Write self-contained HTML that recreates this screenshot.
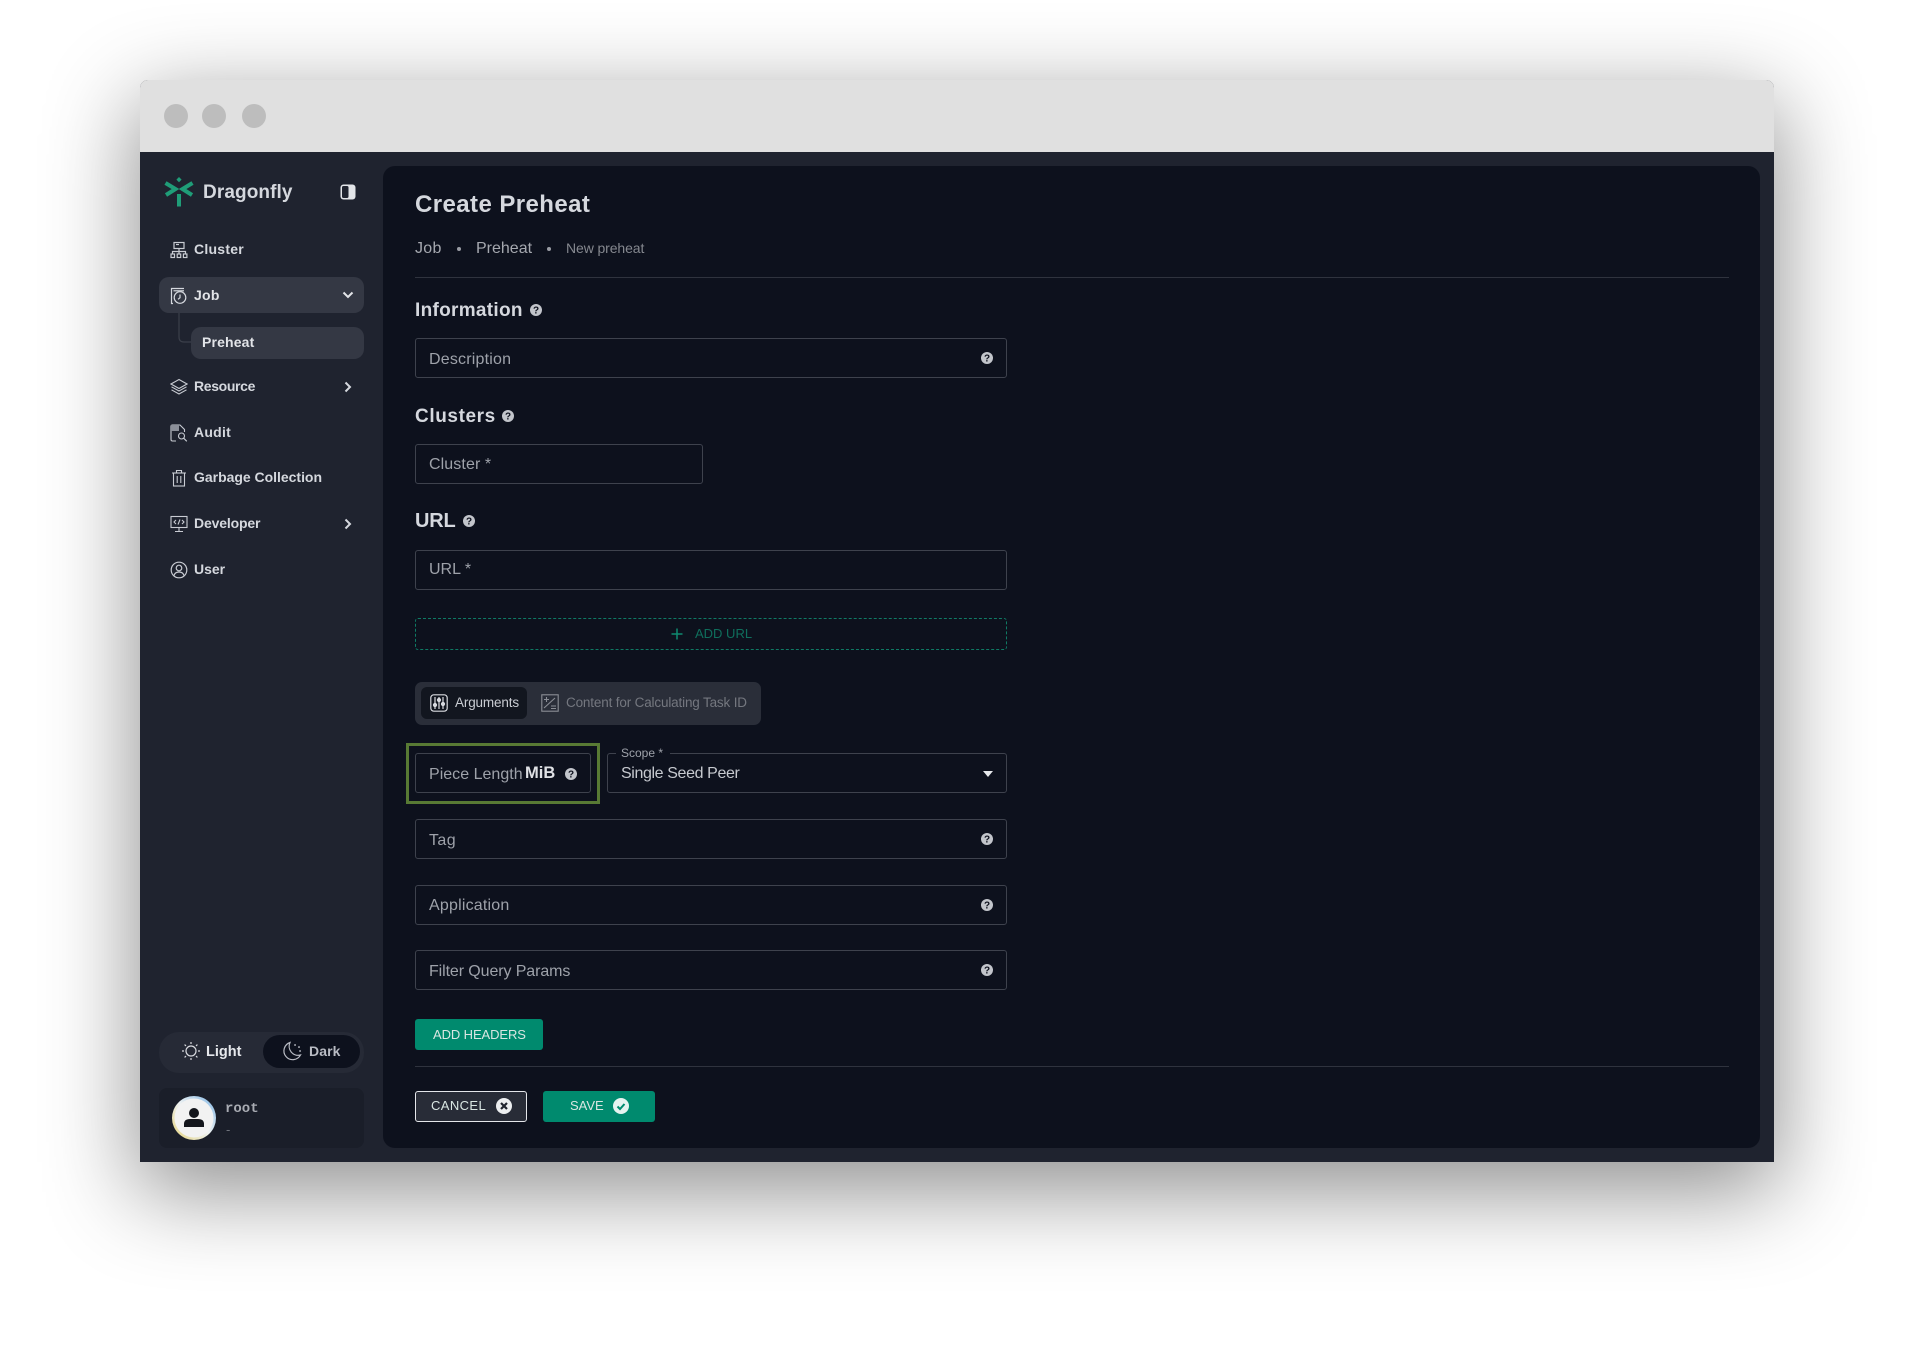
<!DOCTYPE html>
<html lang="en">
<head>
<meta charset="utf-8">
<title>Dragonfly - Create Preheat</title>
<style>
html,body{margin:0;padding:0;background:#fff;}
body{width:1914px;height:1362px;position:relative;overflow:hidden;font-family:"Liberation Sans",sans-serif;}
#all{position:absolute;left:0;top:0;width:1914px;height:1362px;overflow:hidden;filter:blur(.35px);}
.abs,.t,svg.i,.input{position:absolute;}
#win{position:absolute;left:140px;top:80px;width:1634px;height:1082px;border-radius:8px 8px 0 0;box-shadow:0 26px 90px 4px rgba(0,0,0,.44);background:#1f232f;}
#bar{position:absolute;left:140px;top:80px;width:1634px;height:72px;background:#e0e0e0;border-radius:8px 8px 0 0;}
.dot{position:absolute;width:24px;height:24px;border-radius:50%;background:#bdbdbd;top:104px;}
#side{position:absolute;left:140px;top:152px;width:243px;height:1010px;background:#1f232f;}
#main{position:absolute;left:383px;top:166px;width:1377px;height:982px;background:#0d111d;border-radius:12px;}
#rest{position:absolute;left:383px;top:152px;width:1391px;height:1010px;background:#1f232f;}
.t{white-space:nowrap;line-height:1;}
.nav{font-size:14px;font-weight:700;color:#d5d8de;letter-spacing:.25px;}
.h{font-size:19px;font-weight:700;color:#d5d8de;}
.input{border:1px solid #3e424d;border-radius:3px;box-sizing:border-box;}
.ph{font-size:16px;color:#9ea2aa;letter-spacing:.2px;}
.hr{position:absolute;left:415px;width:1314px;height:1px;background:#2f333e;}
.btn{position:absolute;border-radius:3px;box-sizing:border-box;}
.bt{font-size:13px;color:#d9e6e2;letter-spacing:0;}
</style>
</head>
<body>
<div id="all">
<div id="win"></div>
<div id="rest"></div>
<div id="side"></div>
<div id="bar"></div>
<div class="dot" style="left:164px"></div>
<div class="dot" style="left:202px"></div>
<div class="dot" style="left:242px"></div>
<div id="main"></div>

<!-- Sidebar -->
<svg class="i" style="left:164px;top:176px" width="30" height="32" viewBox="0 0 30 32" fill="none">
<g stroke="#1f9d78" stroke-width="4" stroke-linecap="butt">
<path d="M1.500 7 11.500 13 2 19"/><path d="M28.500 7 18.500 13 28 19"/><path d="M15 18V30.500"/>
</g>
<path d="M15 1l2.600 2.600L15 6.200l-2.600-2.600z" fill="#1f9d78"/>
</svg>
<div class="t" style="left:203px;top:183px;font-size:19px;font-weight:700;color:#d5d8de;letter-spacing:.1px">Dragonfly</div>
<svg class="i" style="left:340px;top:184px" width="16" height="16" viewBox="0 0 16 16">
<rect x=".5" y=".5" width="15" height="15" rx="3" fill="#e3e5e9"/>
<rect x="2" y="2" width="6.5" height="12" rx="1.5" fill="#1f232f"/>
</svg>

<svg class="i" style="left:170px;top:241px" width="18" height="18" viewBox="0 0 18 18" fill="none" stroke="#c9ccd3" stroke-width="1.2">
<rect x="4" y="1.5" width="10" height="6"/><path d="M6 3.500h3"/><path d="M9 7.500v3M2.500 13v-2.500h13V13M9 10.500V13"/>
<rect x="1" y="13" width="3.500" height="3.500"/><rect x="7.200" y="13" width="3.500" height="3.500"/><rect x="13.400" y="13" width="3.500" height="3.500"/>
</svg>
<div class="t nav" style="left:194px;top:242px">Cluster</div>

<div class="abs" style="left:159px;top:277px;width:205px;height:36px;background:#343844;border-radius:10px"></div>
<svg class="i" style="left:170px;top:287px" width="18" height="18" viewBox="0 0 18 18" fill="none" stroke="#d5d8de" stroke-width="1.2">
<path d="M3 16.500H1.500V1.500H14"/><path d="M3.500 3.800h10.500"/><circle cx="10" cy="10.500" r="5.800"/><path d="M10 7.500v3.200l-2 1.600"/>
</svg>
<div class="t nav" style="left:194px;top:288px;color:#e2e4e8">Job</div>
<svg class="i" style="left:341px;top:290px" width="14" height="10" viewBox="0 0 14 10" fill="none" stroke="#e2e4e8" stroke-width="2"><path d="M2.500 2.500 7 7l4.500-4.500"/></svg>
<svg class="i" style="left:178px;top:313px" width="16" height="32" viewBox="0 0 16 32" fill="none" stroke="#3b3f4a" stroke-width="1.200"><path d="M1 0V24Q1 29 6 29H13"/></svg>
<div class="abs" style="left:191px;top:327px;width:173px;height:32px;background:#343844;border-radius:10px"></div>
<div class="t nav" style="left:202px;top:335px;color:#e2e4e8;letter-spacing:.15px">Preheat</div>

<svg class="i" style="left:170px;top:378px" width="18" height="18" viewBox="0 0 18 18" fill="none" stroke="#c9ccd3" stroke-width="1.100"><path d="M9 1.500 17 6 9 10.500 1 6z"/><path d="M1.500 8.800 9 13l7.500-4.200"/><path d="M1.500 11.800 9 16l7.500-4.200"/></svg>
<div class="t nav" style="left:194px;top:379px;letter-spacing:-.35px">Resource</div>
<svg class="i" style="left:343px;top:380px" width="10" height="14" viewBox="0 0 10 14" fill="none" stroke="#d5d8de" stroke-width="2"><path d="M2.500 2.500 7 7l-4.500 4.500"/></svg>

<svg class="i" style="left:170px;top:424px" width="18" height="18" viewBox="0 0 18 18" fill="none" stroke="#c9ccd3" stroke-width="1.100">
<path d="M6 17H2.500Q1 17 1 15.500V2.500Q1 1 2.500 1H10l4.500 4.500V8"/><path d="M1 1h8v6H1z" fill="#8b8f99" stroke="none"/><circle cx="11.500" cy="12" r="3"/><path d="m13.800 14.300 3 3"/></svg>
<div class="t nav" style="left:194px;top:425px">Audit</div>

<svg class="i" style="left:171px;top:469px" width="16" height="18" viewBox="0 0 16 18" fill="none" stroke="#c9ccd3" stroke-width="1.100"><path d="M1 4h14M5.500 4V1.500h5V4"/><rect x="2.500" y="4" width="11" height="13"/><path d="M6.200 7v7M9.800 7v7"/></svg>
<div class="t nav" style="left:194px;top:470px;letter-spacing:-.02px">Garbage Collection</div>

<svg class="i" style="left:170px;top:515px" width="18" height="18" viewBox="0 0 18 18" fill="none" stroke="#c9ccd3" stroke-width="1.100"><rect x="1" y="1.500" width="16" height="11"/><path d="M9 12.500V16M5 16.500h8M6 5 4 7l2 2M12 5l2 2-2 2M10 4.500l-2 5"/></svg>
<div class="t nav" style="left:194px;top:516px;letter-spacing:-.15px">Developer</div>
<svg class="i" style="left:343px;top:517px" width="10" height="14" viewBox="0 0 10 14" fill="none" stroke="#d5d8de" stroke-width="2"><path d="M2.500 2.500 7 7l-4.500 4.500"/></svg>

<svg class="i" style="left:170px;top:561px" width="18" height="18" viewBox="0 0 18 18" fill="none" stroke="#c9ccd3" stroke-width="1.200"><circle cx="9" cy="9" r="7.800"/><circle cx="9" cy="7" r="2.800"/><path d="M4 14.500Q5 11 9 11t5 3.500"/></svg>
<div class="t nav" style="left:194px;top:562px;letter-spacing:0">User</div>

<div class="abs" style="left:159px;top:1032px;width:205px;height:41px;background:#262a36;border-radius:20px"></div>
<div class="abs" style="left:263px;top:1035px;width:97px;height:33px;background:#0d111d;border-radius:17px"></div>
<svg class="i" style="left:181px;top:1041px" width="20" height="20" viewBox="0 0 20 20" fill="none" stroke="#d9dbe0" stroke-width="1.200"><circle cx="10" cy="10" r="5"/><path d="M10 1v2M10 17v2M1 10h2M17 10h2M3.600 3.600 5 5M15 15l1.400 1.400M3.600 16.400 5 15M15 5l1.400-1.400"/></svg>
<div class="t" style="left:206px;top:1045px;font-size:14.500px;font-weight:700;color:#e6e8ec">Light</div>
<svg class="i" style="left:282px;top:1041px" width="21" height="20" viewBox="0 0 21 20" fill="none" stroke="#b9bcc4" stroke-width="1.200"><path d="M8 1.500A8.800 8.800 0 1 0 18.500 14 9 9 0 0 1 8 1.500z"/><path d="M13 4h.1M17 6v.1M18 10h.1" stroke-width="1.800" stroke-linecap="round"/></svg>
<div class="t" style="left:309px;top:1044px;font-size:14px;font-weight:700;color:#b9bcc4;letter-spacing:.1px">Dark</div>

<div class="abs" style="left:159px;top:1088px;width:205px;height:60px;background:#1a1e29;border-radius:8px"></div>
<svg class="i" style="left:172px;top:1096px" width="44" height="44" viewBox="0 0 44 44">
<defs><linearGradient id="g" x1="0" y1="1" x2="1" y2="0"><stop offset="0" stop-color="#e5d27a"/><stop offset=".5" stop-color="#eef2f2"/><stop offset="1" stop-color="#7fb6e6"/></linearGradient></defs>
<circle cx="22" cy="22" r="22" fill="url(#g)"/><circle cx="22" cy="22" r="19.500" fill="#f2f2f2"/>
<circle cx="22" cy="17" r="5" fill="#14161c"/><path d="M12 31v-3q0-5 6-5h8q6 0 6 5v3z" fill="#14161c"/>
</svg>
<div class="t" style="left:225px;top:1102px;font-size:14px;font-weight:700;font-family:'Liberation Mono',monospace;color:#a9acb3">root</div>
<div class="t" style="left:226px;top:1123px;font-size:13px;color:#6f737c">-</div>

<!-- Main -->
<div class="t" style="left:415px;top:193px;font-size:24px;font-weight:700;color:#d5d8de;letter-spacing:.42px">Create Preheat</div>
<div class="t" style="left:415px;top:241px;font-size:16px;color:#a5a8af;letter-spacing:.3px">Job</div>
<div class="abs" style="left:457px;top:247px;width:4px;height:4px;border-radius:50%;background:#9a9da5"></div>
<div class="t" style="left:476px;top:241px;font-size:16px;color:#a5a8af;letter-spacing:0">Preheat</div>
<div class="abs" style="left:547px;top:247px;width:4px;height:4px;border-radius:50%;background:#9a9da5"></div>
<div class="t" style="left:566px;top:241px;font-size:14px;color:#85888f;letter-spacing:-.1px">New preheat</div>
<div class="hr" style="top:277px"></div>

<div class="t h" style="left:415px;top:301px;letter-spacing:.3px">Information</div>
<svg class="i" style="left:530px;top:304px" width="12" height="12" viewBox="0 0 12 12"><circle cx="6" cy="6" r="6" fill="#c2c5cb"/><text x="6" y="9.500" font-size="10" font-weight="700" text-anchor="middle" fill="#0d111d" font-family="Liberation Sans">?</text></svg>
<div class="input" style="left:415px;top:338px;width:592px;height:40px"></div>
<div class="t ph" style="left:429px;top:352px">Description</div>
<svg class="i" style="left:981px;top:352px" width="12" height="12" viewBox="0 0 12 12"><circle cx="6" cy="6" r="6" fill="#c2c5cb"/><text x="6" y="9.500" font-size="10" font-weight="700" text-anchor="middle" fill="#0d111d" font-family="Liberation Sans">?</text></svg>

<div class="t h" style="left:415px;top:407px;letter-spacing:.6px">Clusters</div>
<svg class="i" style="left:502px;top:410px" width="12" height="12" viewBox="0 0 12 12"><circle cx="6" cy="6" r="6" fill="#c2c5cb"/><text x="6" y="9.500" font-size="10" font-weight="700" text-anchor="middle" fill="#0d111d" font-family="Liberation Sans">?</text></svg>
<div class="input" style="left:415px;top:444px;width:288px;height:40px"></div>
<div class="t ph" style="left:429px;top:457px;letter-spacing:.1px">Cluster *</div>

<div class="t h" style="left:415px;top:511px;font-size:20px;letter-spacing:-.2px">URL</div>
<svg class="i" style="left:463px;top:515px" width="12" height="12" viewBox="0 0 12 12"><circle cx="6" cy="6" r="6" fill="#c2c5cb"/><text x="6" y="9.500" font-size="10" font-weight="700" text-anchor="middle" fill="#0d111d" font-family="Liberation Sans">?</text></svg>
<div class="input" style="left:415px;top:550px;width:592px;height:40px"></div>
<div class="t ph" style="left:429px;top:562px;letter-spacing:0">URL *</div>

<div class="abs" style="left:415px;top:618px;width:592px;height:32px;border:1px dashed #0f7a64;border-radius:3px;box-sizing:border-box"></div>
<svg class="i" style="left:671px;top:628px" width="12" height="12" viewBox="0 0 12 12" stroke="#0f8a70" stroke-width="1.500"><path d="M6 .5v11M.5 6h11"/></svg>
<div class="t" style="left:695px;top:627px;font-size:13px;color:#0f6e5c">ADD URL</div>

<div class="abs" style="left:415px;top:682px;width:346px;height:43px;background:#2a2e39;border-radius:7px"></div>
<div class="abs" style="left:421px;top:687px;width:106px;height:32px;background:#12161f;border-radius:6px"></div>
<svg class="i" style="left:430px;top:694px" width="18" height="18" viewBox="0 0 18 18" fill="none" stroke="#d9dbe0" stroke-width="1.200"><rect x=".8" y=".8" width="16.400" height="16.400" rx="3"/><path d="M5 3v12M9 3v12M13 3v12" /><circle cx="5" cy="11" r="1.500" fill="#d9dbe0"/><circle cx="9" cy="6" r="1.500" fill="#d9dbe0"/><circle cx="13" cy="10" r="1.500" fill="#d9dbe0"/></svg>
<div class="t" style="left:455px;top:696px;font-size:13.500px;color:#c9ccd2;letter-spacing:-.15px">Arguments</div>
<svg class="i" style="left:541px;top:694px" width="18" height="18" viewBox="0 0 18 18" fill="none" stroke="#8b8e96" stroke-width="1.100"><rect x=".8" y=".8" width="16.400" height="16.400"/><path d="M3 14 14 4M3 5.500h5M5.500 3v5M10 12h5M10 14.500h5"/></svg>
<div class="t" style="left:566px;top:696px;font-size:13.500px;color:#74777f;letter-spacing:-.16px">Content for Calculating Task ID</div>

<div class="abs" style="left:406px;top:743px;width:194px;height:61px;border:3px solid #587a34;box-sizing:border-box"></div>
<div class="input" style="left:415px;top:753px;width:176px;height:40px"></div>
<div class="t ph" style="left:429px;top:767px;letter-spacing:.02px">Piece Length</div>
<div class="t" style="left:525px;top:765px;font-size:16.500px;font-weight:700;color:#dfe1e5">MiB</div>
<svg class="i" style="left:565px;top:768px" width="12" height="12" viewBox="0 0 12 12"><circle cx="6" cy="6" r="6" fill="#c2c5cb"/><text x="6" y="9.500" font-size="10" font-weight="700" text-anchor="middle" fill="#0d111d" font-family="Liberation Sans">?</text></svg>

<div class="input" style="left:607px;top:753px;width:400px;height:40px"></div>
<div class="abs" style="left:616px;top:750px;width:54px;height:6px;background:#0d111d"></div>
<div class="t" style="left:621px;top:747px;font-size:12px;color:#9ea2aa;letter-spacing:0">Scope *</div>
<div class="t" style="left:621px;top:766px;font-size:16px;color:#c6c9cf;letter-spacing:-.38px">Single Seed Peer</div>
<svg class="i" style="left:983px;top:771px" width="10" height="6" viewBox="0 0 10 6"><path d="M0 0h10L5 6z" fill="#e6e8ec"/></svg>

<div class="input" style="left:415px;top:819px;width:592px;height:40px"></div>
<div class="t ph" style="left:429px;top:833px;letter-spacing:.4px">Tag</div>
<svg class="i" style="left:981px;top:833px" width="12" height="12" viewBox="0 0 12 12"><circle cx="6" cy="6" r="6" fill="#c2c5cb"/><text x="6" y="9.500" font-size="10" font-weight="700" text-anchor="middle" fill="#0d111d" font-family="Liberation Sans">?</text></svg>

<div class="input" style="left:415px;top:885px;width:592px;height:40px"></div>
<div class="t ph" style="left:429px;top:898px">Application</div>
<svg class="i" style="left:981px;top:899px" width="12" height="12" viewBox="0 0 12 12"><circle cx="6" cy="6" r="6" fill="#c2c5cb"/><text x="6" y="9.500" font-size="10" font-weight="700" text-anchor="middle" fill="#0d111d" font-family="Liberation Sans">?</text></svg>

<div class="input" style="left:415px;top:950px;width:592px;height:40px"></div>
<div class="t ph" style="left:429px;top:964px;letter-spacing:-.1px">Filter Query Params</div>
<svg class="i" style="left:981px;top:964px" width="12" height="12" viewBox="0 0 12 12"><circle cx="6" cy="6" r="6" fill="#c2c5cb"/><text x="6" y="9.500" font-size="10" font-weight="700" text-anchor="middle" fill="#0d111d" font-family="Liberation Sans">?</text></svg>

<div class="btn" style="left:415px;top:1019px;width:128px;height:31px;background:#008a6e"></div>
<div class="t bt" style="left:433px;top:1028px;letter-spacing:-.1px">ADD HEADERS</div>
<div class="hr" style="top:1066px"></div>

<div class="btn" style="left:415px;top:1091px;width:112px;height:31px;background:#282c37;border:1px solid #e4e6ea"></div>
<div class="t bt" style="left:431px;top:1099px;letter-spacing:.4px">CANCEL</div>
<svg class="i" style="left:496px;top:1098px" width="16" height="16" viewBox="0 0 16 16"><circle cx="8" cy="8" r="8" fill="#eceef0"/><path d="m5 5 6 6M11 5l-6 6" stroke="#20242e" stroke-width="2.200"/></svg>
<div class="btn" style="left:543px;top:1091px;width:112px;height:31px;background:#008a6e"></div>
<div class="t bt" style="left:570px;top:1099px">SAVE</div>
<svg class="i" style="left:613px;top:1098px" width="16" height="16" viewBox="0 0 16 16"><circle cx="8" cy="8" r="8" fill="#e6f3f0"/><path d="m4.500 8.500 2.500 2.500 4.500-5" fill="none" stroke="#008a6e" stroke-width="2"/></svg>
</div>
</body>
</html>
